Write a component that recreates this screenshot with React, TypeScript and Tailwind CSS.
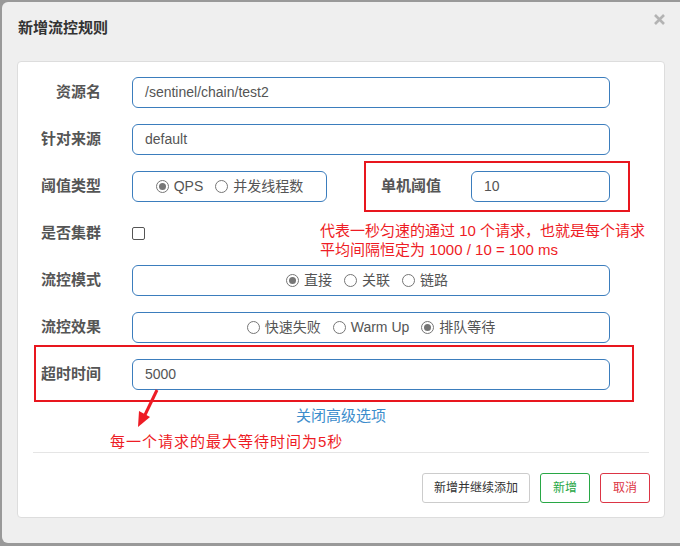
import React from 'react'

const font = { fontFamily: '"Liberation Sans", "Noto Sans CJK SC", sans-serif' }

const Radio = ({ checked, label }: { checked?: boolean; label: string }) => (
  <span className="flex items-center gap-[5px]">
    <span className="flex h-[13px] w-[13px] items-center justify-center rounded-full border border-[#767676] bg-white">
      {checked && <span className="h-[7px] w-[7px] rounded-full bg-[#767676]" />}
    </span>
    <span>{label}</span>
  </span>
)

const Label = ({ children, className = '' }: { children: React.ReactNode; className?: string }) => (
  <div className={`shrink-0 text-right text-[15px] font-bold text-[#555] ${className}`}>{children}</div>
)

const inputBox = 'h-[31px] rounded-[6px] border border-[#3b7dbd] bg-white text-[14px] text-[#555]'

export default function App() {
  return (
    <div className="h-[546px] w-[680px] overflow-hidden bg-[#999] pl-[2px] pt-[2px]" style={font}>
      <div className="relative h-[541px] rounded-l-[6px] bg-[#efefef] pl-[15px] pt-[16px]">
        <div className="pl-[1px] text-[15px] font-bold leading-[20px] text-[#333]">新增流控规则</div>
        <svg className="absolute right-[15px] top-[12px]" width="11" height="11" viewBox="0 0 11 11">
          <path d="M1 1 L10 10 M10 1 L1 10" stroke="#b3b3b3" strokeWidth="2.6" />
        </svg>

        <div className="relative mt-[23px] w-[648px] rounded-[4px] border border-[#ddd] bg-white pb-[14px] pt-[15px]">
          <div className="flex flex-col gap-[16px]">
            <div className="flex items-center">
              <Label className="w-[83px]">资源名</Label>
              <div className={`${inputBox} ml-[31px] flex w-[478px] items-center pl-[12px]`}>/sentinel/chain/test2</div>
            </div>
            <div className="flex items-center">
              <Label className="w-[83px]">针对来源</Label>
              <div className={`${inputBox} ml-[31px] flex w-[478px] items-center pl-[12px]`}>default</div>
            </div>
            <div className="flex items-center">
              <Label className="w-[83px]">阈值类型</Label>
              <div className={`${inputBox} ml-[31px] flex w-[195px] items-center justify-center gap-[12px]`}>
                <Radio checked label="QPS" />
                <Radio label="并发线程数" />
              </div>
              <Label className="w-[114px]">单机阈值</Label>
              <div className={`${inputBox} ml-[30px] flex w-[139px] items-center pl-[12px]`}>10</div>
            </div>
            <div className="flex h-[31px] items-center">
              <Label className="w-[83px]">是否集群</Label>
              <span className="ml-[31px] h-[13px] w-[13px] rounded-[2px] border border-[#555] bg-white" />
            </div>
            <div className="flex items-center">
              <Label className="w-[83px]">流控模式</Label>
              <div className={`${inputBox} ml-[31px] flex w-[478px] items-center justify-center gap-[12px] pr-[8px]`}>
                <Radio checked label="直接" />
                <Radio label="关联" />
                <Radio label="链路" />
              </div>
            </div>
            <div className="flex items-center">
              <Label className="w-[83px]">流控效果</Label>
              <div className={`${inputBox} ml-[31px] flex w-[478px] items-center justify-center gap-[12px]`}>
                <Radio label="快速失败" />
                <Radio label="Warm Up" />
                <Radio checked label="排队等待" />
              </div>
            </div>
            <div className="flex items-center">
              <Label className="w-[83px]">超时时间</Label>
              <div className={`${inputBox} ml-[31px] flex w-[478px] items-center pl-[12px]`}>5000</div>
            </div>
          </div>

          <div className="mt-[16px] text-center text-[15px] leading-[20px] text-[#3c8dcc]">关闭高级选项</div>

          <div className="mx-[15px] mt-[26px] border-t border-[#e5e5e5]" />

          <div className="mr-[14px] mt-[20px] flex justify-end gap-[10px] text-[12px]">
            <button className="h-[30px] rounded-[3px] border border-[#ccc] bg-white px-[11px] text-[#333]">新增并继续添加</button>
            <button className="h-[30px] rounded-[3px] border border-[#28a745] bg-white px-[12px] text-[#28a745]">新增</button>
            <button className="h-[30px] rounded-[3px] border border-[#dc3545] bg-white px-[12px] text-[#dc3545]">取消</button>
          </div>

          {/* annotations */}
          <div className="absolute left-[346px] top-[99px] h-[51px] w-[266px] border-2 border-[#e8161e]" />
          <div className="absolute left-[16px] top-[283px] h-[57px] w-[600px] border-2 border-[#e8161e]" />
          <div className="absolute left-[302px] top-[159px] text-[15px] leading-[19px] text-[#ee1c25]">
            <div>代表一秒匀速的通过 10 个请求，也就是每个请求</div>
            <div>平均间隔恒定为 1000 / 10 = 100 ms</div>
          </div>
          <svg className="absolute left-[115px] top-[327px]" width="30" height="42" viewBox="0 0 30 42">
            <path d="M24 1 L10 30" stroke="#ee1c25" strokeWidth="3" />
            <path d="M5 38 L6 22 L17 28 Z" fill="#ee1c25" />
          </svg>
          <div className="absolute left-[92px] top-[370px] text-[15px] leading-[20px] tracking-[1px] text-[#ee1c25]">每一个请求的最大等待时间为5秒</div>
        </div>
      </div>
    </div>
  )
}
